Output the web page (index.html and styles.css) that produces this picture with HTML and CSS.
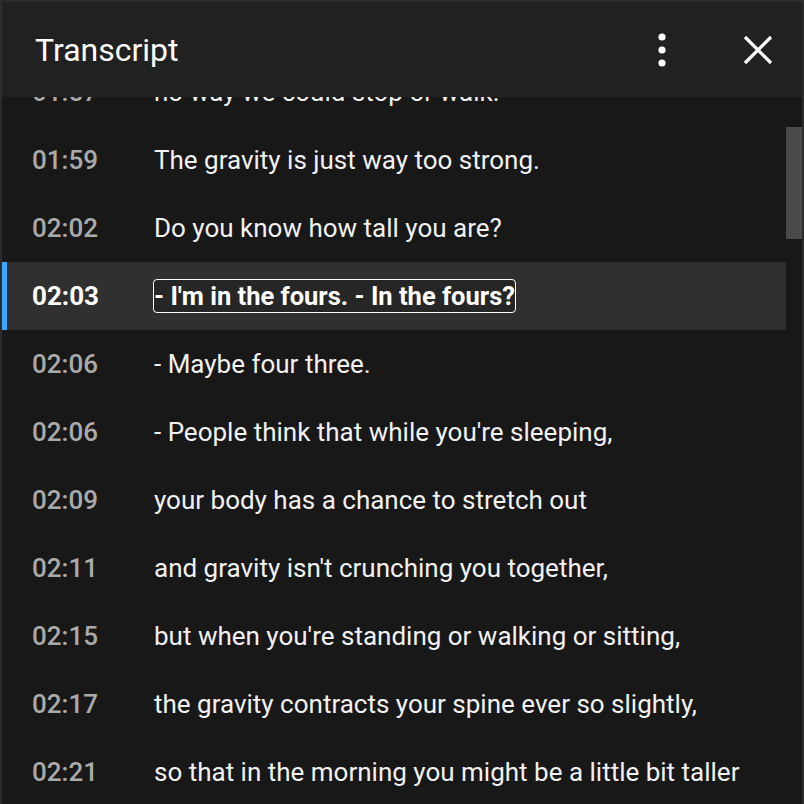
FILE: index.html
```html
<!DOCTYPE html>
<html lang="en">
<head>
<meta charset="utf-8">
<title>Transcript</title>
<link rel="stylesheet" href="styles.css">
</head>
<body>
<div class="panel">
  <header class="header">
    <h1 class="title">Transcript</h1>
    <button class="icon-btn" aria-label="More actions">
      <svg width="24" height="36" viewBox="0 0 24 36"><circle cx="12" cy="5" r="3.6" fill="#fff"/><circle cx="12" cy="18" r="3.6" fill="#fff"/><circle cx="12" cy="31" r="3.6" fill="#fff"/></svg>
    </button>
    <button class="icon-btn close" aria-label="Close">
      <svg width="32" height="32" viewBox="0 0 32 32"><path d="M3 3 L29 29 M29 3 L3 29" stroke="#fff" stroke-width="3.2" fill="none"/></svg>
    </button>
  </header>
  <div class="body">
    <ul class="list">
      <li class="row"><span class="time">01:57</span><span class="text">no way we could stop or walk.</span></li>
      <li class="row"><span class="time">01:59</span><span class="text">The gravity is just way too strong.</span></li>
      <li class="row"><span class="time">02:02</span><span class="text">Do you know how tall you are?</span></li>
      <li class="row active"><span class="time">02:03</span><span class="text">- I'm in the fours. - In the fours?</span></li>
      <li class="row"><span class="time">02:06</span><span class="text">- Maybe four three.</span></li>
      <li class="row"><span class="time">02:06</span><span class="text">- People think that while you're sleeping,</span></li>
      <li class="row"><span class="time">02:09</span><span class="text">your body has a chance to stretch out</span></li>
      <li class="row"><span class="time">02:11</span><span class="text">and gravity isn't crunching you together,</span></li>
      <li class="row"><span class="time">02:15</span><span class="text">but when you're standing or walking or sitting,</span></li>
      <li class="row"><span class="time">02:17</span><span class="text">the gravity contracts your spine ever so slightly,</span></li>
      <li class="row"><span class="time">02:21</span><span class="text">so that in the morning you might be a little bit taller</span></li>
    </ul>
    <div class="thumb"></div>
  </div>
</div>
</body>
</html>
```

FILE: styles.css
```css
* { box-sizing: border-box; }
html, body {
  margin: 0;
  padding: 0;
  background: #181818;
}
body {
  font-family: Roboto, "Noto Sans", "Liberation Sans", sans-serif;
  color: #f1f1f1;
}
.panel {
  width: 804px;
  height: 804px;
  border: 2px solid #2c2c2c;
  border-bottom: none;
  display: flex;
  flex-direction: column;
  overflow: hidden;
  background: #181818;
}
.header {
  height: 95px;
  flex: none;
  display: flex;
  align-items: center;
  padding: 0 20px 0 33px;
  background: #212121;
  position: relative;
  z-index: 1;
}
.title {
  margin: 0;
  flex: 1;
  font-size: 32px;
  font-weight: 400;
  color: #fff;
}
.icon-btn {
  width: 48px;
  height: 48px;
  border: none;
  background: none;
  padding: 0;
  display: flex;
  align-items: center;
  justify-content: center;
}
.close { margin-left: 48px; }
.body {
  flex: 1;
  position: relative;
  overflow: hidden;
}
.list {
  list-style: none;
  margin: -39px 0 0 0;
  padding: 0 16px 0 0;
}
.row {
  height: 68px;
  display: flex;
  align-items: center;
  font-size: 26px;
}
.time {
  width: 152px;
  padding-left: 30px;
  flex: none;
  color: #aaaaaa;
  font-weight: 500;
}
.text {
  color: #f1f1f1;
  line-height: 32px;
  white-space: nowrap;
}
.row.active {
  background: #303030;
  box-shadow: inset 5px 0 0 #3ea6ff;
}
.row.active .time,
.row.active .text {
  color: #fff;
  font-weight: 700;
}
.row.active .text {
  font-size: 25.5px;
  outline: 1px solid #fff;
  border-radius: 3px;
  background: #262626;
}
.thumb {
  position: absolute;
  right: 0;
  top: 30px;
  width: 16px;
  height: 112px;
  background: #4a4a4a;
}
```
